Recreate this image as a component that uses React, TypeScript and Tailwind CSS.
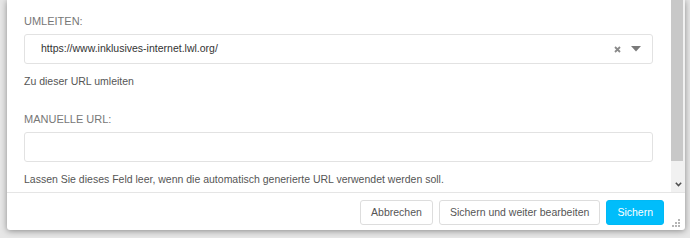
import React from "react";

function Grip() {
  return (
    <svg width="9" height="9" viewBox="0 0 9 9" className="block">
      <rect x="6" y="0" width="2" height="2" fill="#b5b5b5" />
      <rect x="3" y="3" width="2" height="2" fill="#b5b5b5" />
      <rect x="6" y="3" width="2" height="2" fill="#b5b5b5" />
      <rect x="0" y="6" width="2" height="2" fill="#b5b5b5" />
      <rect x="3" y="6" width="2" height="2" fill="#b5b5b5" />
      <rect x="6" y="6" width="2" height="2" fill="#b5b5b5" />
    </svg>
  );
}

export default function App() {
  return (
    <div className="w-[690px] h-[238px] bg-[#e6e6e6] overflow-hidden pl-[7px] pr-[5px] font-['Liberation_Sans',Arial,sans-serif]">
      <div className="h-[230px] bg-white rounded-b-[3px] shadow-[0_1px_6px_rgba(0,0,0,0.4)] flex flex-col">
        <div className="flex h-[192px]">
          <div className="flex-1 pl-[17px] pr-[18px] pt-[13px]">
            <div className="text-[11px] leading-[16px] text-[#777] mb-[5px]">UMLEITEN:</div>
            <div className="h-[30px] border border-[#e2e2e2] rounded-[3px] flex items-center pl-[16px] pr-[11px]">
              <span className="flex-1 text-[10.5px] text-[#333]">https://www.inklusives-internet.lwl.org/</span>
              <svg width="7" height="7" viewBox="0 0 7 7" className="mr-[10px]">
                <path d="M1 1 L6 6 M6 1 L1 6" stroke="#8a8a8a" strokeWidth="1.8" />
              </svg>
              <svg width="10" height="6" viewBox="0 0 10 6">
                <path d="M0 0 H10 L5 5.5 Z" fill="#7a7a7a" />
              </svg>
            </div>
            <div className="mt-[9px] text-[10.5px] leading-[16px] text-[#555]">Zu dieser URL umleiten</div>

            <div className="mt-[22px] text-[11px] leading-[16px] text-[#777] mb-[5px]">MANUELLE URL:</div>
            <div className="h-[30px] border border-[#e2e2e2] rounded-[3px]" />
            <div className="mt-[9px] text-[10.5px] leading-[16px] text-[#555]">
              Lassen Sie dieses Feld leer, wenn die automatisch generierte URL verwendet werden soll.
            </div>
          </div>
          <div className="w-[14px] bg-[#f1f1f1] flex flex-col">
            <div className="h-[161px] bg-[#c8c8c8] mr-[2px]" />
            <div className="flex-1 flex items-end justify-center pb-[5px]">
              <svg width="7" height="5" viewBox="0 0 7 5">
                <path d="M0.8 0.8 L3.5 3.6 L6.2 0.8" stroke="#505050" strokeWidth="1.5" fill="none" />
              </svg>
            </div>
          </div>
        </div>
        <div className="relative flex-1 border-t border-[#e5e5e5] flex justify-end items-start gap-[6px] pt-[7px] pr-[21px]">
          <button className="h-[25px] px-[10px] border border-[#dddddd] rounded-[3px] bg-white text-[10.5px] text-[#555]">
            Abbrechen
          </button>
          <button className="h-[25px] px-[10px] border border-[#dddddd] rounded-[3px] bg-white text-[10.5px] text-[#555]">
            Sichern und weiter bearbeiten
          </button>
          <button className="h-[25px] px-[10px] border border-[#00b9f5] rounded-[3px] bg-[#00bdfb] text-[10.5px] text-white">
            Sichern
          </button>
          <div className="absolute right-[4px] bottom-[2px]">
            <Grip />
          </div>
        </div>
      </div>
    </div>
  );
}
